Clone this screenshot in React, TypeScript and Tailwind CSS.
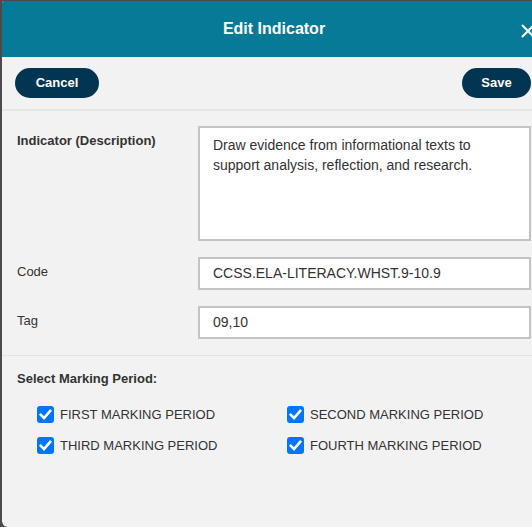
import React from "react";

function Check({ label }: { label: string }) {
  return (
    <div className="flex items-center gap-[6px] h-[17px]">
      <span className="w-[17px] h-[17px] rounded-[3px] bg-[#0075ff] flex items-center justify-center shrink-0">
        <svg width="17" height="17" viewBox="0 0 17 17">
          <path d="M3.8 8.8 L7 12 L13.2 4.8" fill="none" stroke="#ffffff" strokeWidth="2.6" strokeLinecap="square" strokeLinejoin="miter" />
        </svg>
      </span>
      <span className="text-[13px] leading-[15px] text-[#333333] whitespace-nowrap">{label}</span>
    </div>
  );
}

export default function App() {
  return (
    <div className="w-[532px] h-[527px] overflow-hidden bg-[#4b4b4b] font-['Liberation_Sans',Arial,sans-serif]">
      <div className="ml-[2px] mt-[1px] w-[544px] h-[526px] bg-[#f2f2f2] rounded-b-[6px] rounded-t-[2px] flex flex-col overflow-hidden">
        <div className="h-[56px] bg-[#077a97] relative flex items-center justify-center shrink-0">
          <span className="text-white font-bold text-[16px] leading-[20px]">Edit Indicator</span>
          <svg className="absolute right-[11px] top-[23px]" width="14" height="14" viewBox="0 0 14 14">
            <path d="M1 1 L13 13 M13 1 L1 13" stroke="#ffffff" strokeWidth="2" fill="none" />
          </svg>
        </div>
        <div className="h-[54px] flex items-center justify-between pl-[13px] pr-[15px] border-b-2 border-[#e4e7ea] shrink-0">
          <button className="w-[84px] h-[30px] rounded-full bg-[#023552] text-white font-bold text-[13px]">Cancel</button>
          <button className="w-[69px] h-[30px] rounded-full bg-[#023552] text-white font-bold text-[13px]">Save</button>
        </div>
        <div className="pt-[15px] pl-[15px] pr-[15px] pb-[16px] border-b border-[#e3e3e3] grid grid-cols-[181px_1fr] gap-y-[16px]">
          <div className="pt-[7px] text-[13px] leading-[15px] font-bold text-[#333333]">Indicator (Description)</div>
          <div className="h-[115px] bg-white border-2 border-[#c4c4c4] px-[13px] pt-[7px] text-[14px] leading-[20px] text-[#333333]">
            Draw evidence from informational texts to
            <br />
            support analysis, reflection, and research.
          </div>
          <div className="pt-[7px] text-[13px] leading-[15px] text-[#333333]">Code</div>
          <div className="h-[33px] bg-white border-2 border-[#c4c4c4] px-[13px] flex items-center text-[14px] text-[#333333]">CCSS.ELA-LITERACY.WHST.9-10.9</div>
          <div className="pt-[7px] text-[13px] leading-[15px] text-[#333333]">Tag</div>
          <div className="h-[33px] bg-white border-2 border-[#c4c4c4] px-[13px] flex items-center text-[14px] text-[#333333]">09,10</div>
        </div>
        <div className="pl-[15px] pt-[15px]">
          <div className="text-[13px] leading-[15px] font-bold text-[#333333]">Select Marking Period:</div>
          <div className="mt-[20px] pl-[20px] grid grid-cols-[250px_250px] gap-y-[14px]">
            <Check label="FIRST MARKING PERIOD" />
            <Check label="SECOND MARKING PERIOD" />
            <Check label="THIRD MARKING PERIOD" />
            <Check label="FOURTH MARKING PERIOD" />
          </div>
        </div>
      </div>
    </div>
  );
}
